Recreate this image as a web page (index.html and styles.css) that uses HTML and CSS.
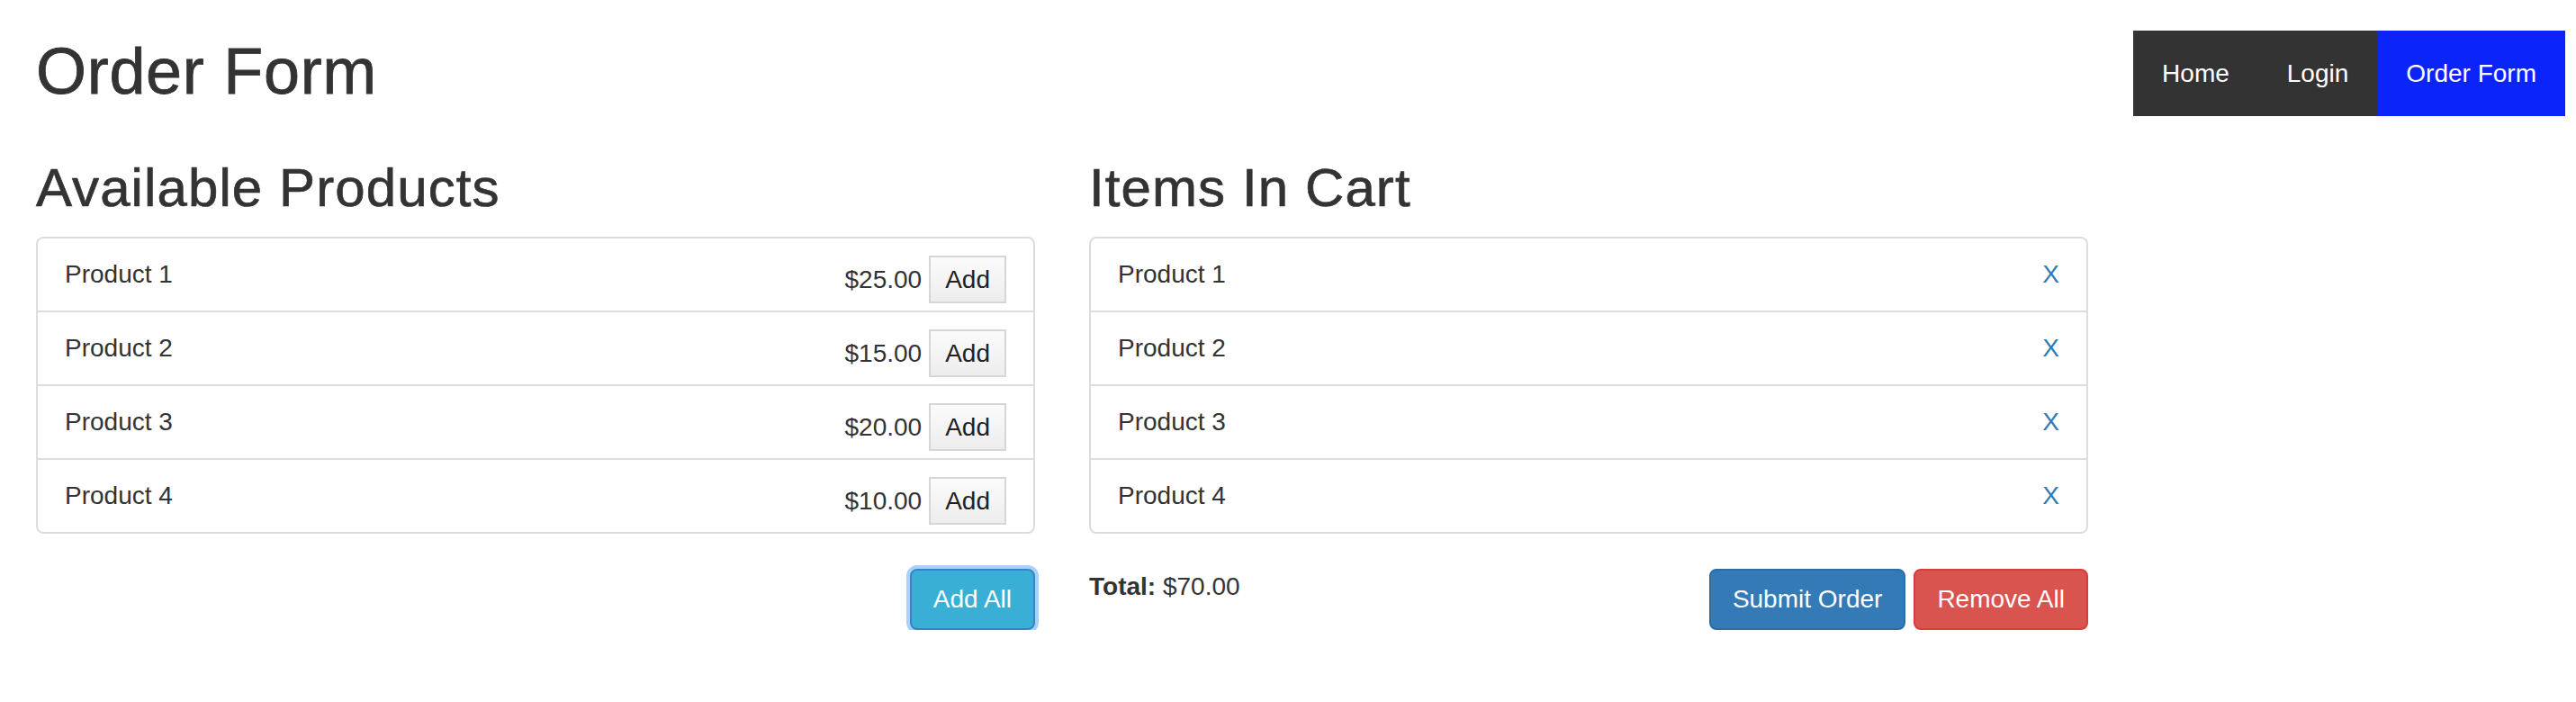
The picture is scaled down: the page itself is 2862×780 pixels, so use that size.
FILE: index.html
```html
<!DOCTYPE html>
<html lang="en">
<head>
<meta charset="utf-8">
<title>Order Form</title>
<link rel="stylesheet" href="styles.css">
</head>
<body>
<header class="top">
  <h1 class="title">Order Form</h1>
  <nav class="nav">
    <a class="nav-link" href="#">Home</a>
    <a class="nav-link" href="#">Login</a>
    <a class="nav-link active" href="#">Order Form</a>
  </nav>
</header>
<main class="columns">
  <section class="col">
    <h2 class="heading">Available Products</h2>
    <ul class="list">
      <li class="item"><span class="name">Product 1</span><span class="right"><span class="price">$25.00</span><button class="add">Add</button></span></li>
      <li class="item"><span class="name">Product 2</span><span class="right"><span class="price">$15.00</span><button class="add">Add</button></span></li>
      <li class="item"><span class="name">Product 3</span><span class="right"><span class="price">$20.00</span><button class="add">Add</button></span></li>
      <li class="item"><span class="name">Product 4</span><span class="right"><span class="price">$10.00</span><button class="add">Add</button></span></li>
    </ul>
    <div class="actions"><button class="btn btn-info">Add All</button></div>
  </section>
  <section class="col">
    <h2 class="heading">Items In Cart</h2>
    <ul class="list">
      <li class="item"><span class="name">Product 1</span><a class="remove" href="#">X</a></li>
      <li class="item"><span class="name">Product 2</span><a class="remove" href="#">X</a></li>
      <li class="item"><span class="name">Product 3</span><a class="remove" href="#">X</a></li>
      <li class="item"><span class="name">Product 4</span><a class="remove" href="#">X</a></li>
    </ul>
    <div class="cart-footer">
      <div class="total"><strong>Total:</strong> $70.00</div>
      <div class="btns">
        <button class="btn btn-primary">Submit Order</button>
        <button class="btn btn-danger">Remove All</button>
      </div>
    </div>
  </section>
</main>
</body>
</html>
```
FILE: styles.css
```css
* { box-sizing: content-box; }
html, body { background: #fff; }
body {
  margin: 0;
  font-family: "Liberation Sans", Arial, Helvetica, sans-serif;
  font-size: 28px;
  line-height: 40px;
  color: #333;
}
.top {
  display: flex;
  justify-content: space-between;
  align-items: flex-start;
  height: 129px;
}
.title {
  margin: 40px 0 0 40px;
  font-size: 72px;
  line-height: 79px;
  font-weight: normal;
  letter-spacing: 0.7px;
  -webkit-text-stroke: 0.8px #333;
}
.nav {
  display: flex;
  margin: 34px 12px 0 0;
  height: 95px;
  background: #333;
}
.nav-link {
  display: flex;
  align-items: center;
  padding: 0 32px;
  color: #fff;
  text-decoration: none;
}
.nav-link.active { background: #0b24fb; }
.columns {
  display: flex;
  gap: 60px;
  padding: 47px 0 0 40px;
}
.col { width: 1110px; }
.heading {
  margin: 0 0 21px;
  font-size: 60px;
  line-height: 66px;
  font-weight: normal;
  letter-spacing: 1.1px;
  -webkit-text-stroke: 0.7px #333;
}
.list {
  margin: 0;
  padding: 0;
  list-style: none;
  border: 2px solid #ddd;
  border-radius: 8px;
}
.item {
  display: flex;
  justify-content: space-between;
  align-items: flex-start;
  height: 60px;
  padding: 20px 30px 0;
  border-top: 2px solid #ddd;
}
.item:first-child { border-top: none; }
.right {
  display: flex;
  align-items: baseline;
  gap: 8px;
  margin-top: -1px;
}
.add {
  height: 49px;
  padding: 0 16px;
  margin: 0;
  font-family: inherit;
  font-size: 28px;
  line-height: 40px;
  color: #222;
  border: 2px solid #d6d6d6;
  border-radius: 0;
  background: linear-gradient(#fbfbfb, #ededed);
}
.remove {
  color: #337ab7;
  text-decoration: none;
}
.actions {
  display: flex;
  justify-content: flex-end;
  margin-top: 39px;
}
.btn {
  margin: 0;
  padding: 12px 24px;
  font-family: inherit;
  font-size: 28px;
  line-height: 40px;
  color: #fff;
  border: 2px solid transparent;
  border-radius: 8px;
}
.btn-info {
  background: #39afd5;
  border-color: #3484cc;
  box-shadow: 0 0 0 4px #a8d2fa;
}
.btn-primary { background: #337ab7; border-color: #2e6da4; }
.btn-danger { background: #d9534f; border-color: #d43f3a; }
.cart-footer {
  display: flex;
  justify-content: space-between;
  align-items: flex-start;
  margin-top: 39px;
}
.btns { display: flex; gap: 9px; }
```
